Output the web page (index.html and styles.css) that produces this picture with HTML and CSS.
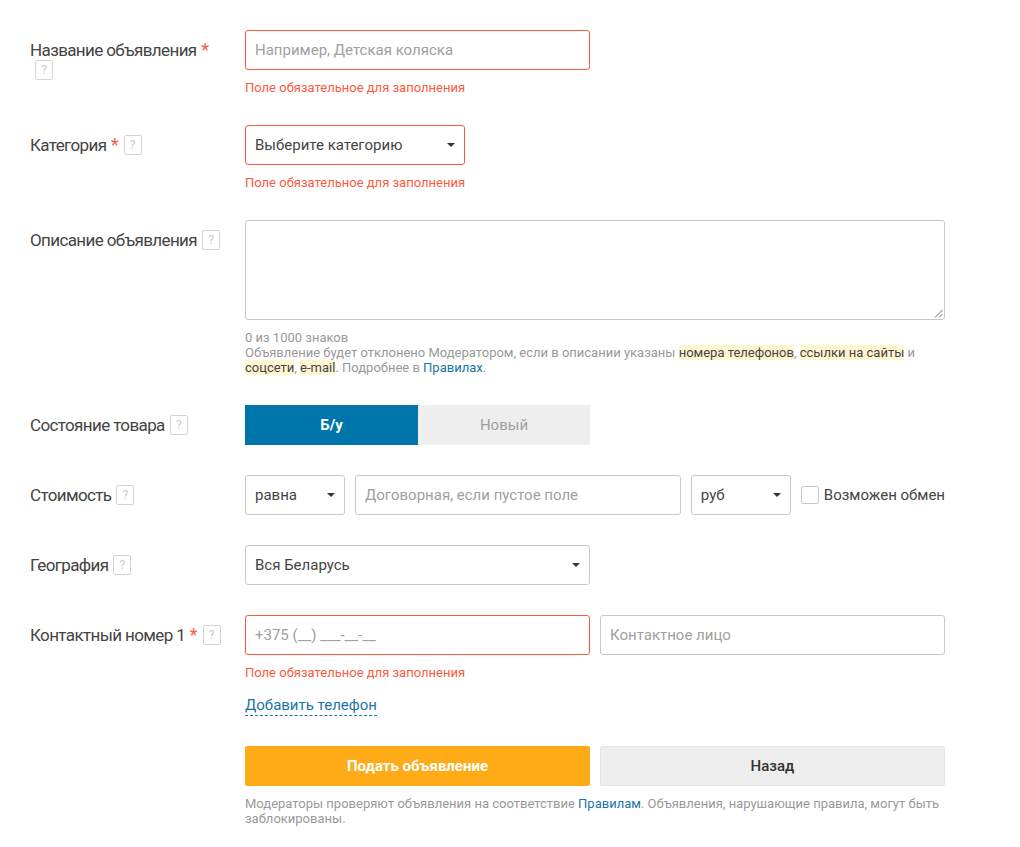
FILE: index.html
```html
<!DOCTYPE html>
<html lang="ru">
<head>
    <meta charset="UTF-8">
    <title>Подать объявление</title>
    <link rel="stylesheet" href="styles.css">
</head>
<body>
    <form class="ad-form">
        <div class="row row-name">
            <div class="label">Название объявления <span class="req">*</span><span class="help">?</span></div>
            <div class="field">
                <div class="control w-345 invalid"><span class="placeholder">Например, Детская коляска</span></div>
                <div class="error">Поле обязательное для заполнения</div>
            </div>
        </div>

        <div class="row row-cat">
            <div class="label">Категория <span class="req">*</span><span class="help">?</span></div>
            <div class="field">
                <div class="control select w-220 invalid">Выберите категорию<span class="caret"></span></div>
                <div class="error">Поле обязательное для заполнения</div>
            </div>
        </div>

        <div class="row row-desc">
            <div class="label">Описание объявления<span class="help">?</span></div>
            <div class="field">
                <div class="textarea">
                    <svg class="grip" width="9" height="9" viewBox="0 0 9 9"><path d="M8.5 1 1 8.5M8.5 5 5 8.5" stroke="#666" fill="none"/></svg>
                </div>
                <div class="hint">
                    0 из 1000 знаков<br>
                    Объявление будет отклонено Модератором, если в описании указаны <mark>номера телефонов</mark>, <mark>ссылки на сайты</mark> и <mark>соцсети</mark>, <mark>e-mail</mark>. Подробнее в <a href="#">Правилах</a>.
                </div>
            </div>
        </div>

        <div class="row row-state">
            <div class="label">Состояние товара<span class="help">?</span></div>
            <div class="field">
                <div class="toggle">
                    <div class="toggle-on">Б/у</div>
                    <div class="toggle-off">Новый</div>
                </div>
            </div>
        </div>

        <div class="row row-price">
            <div class="label">Стоимость<span class="help">?</span></div>
            <div class="field">
                <div class="inline">
                    <div class="control select w-100">равна<span class="caret"></span></div>
                    <div class="control grow"><span class="placeholder">Договорная, если пустое поле</span></div>
                    <div class="control select w-100">руб<span class="caret"></span></div>
                    <label class="check"><span class="box"></span>Возможен обмен</label>
                </div>
            </div>
        </div>

        <div class="row row-geo">
            <div class="label">География<span class="help">?</span></div>
            <div class="field">
                <div class="control select w-345">Вся Беларусь<span class="caret"></span></div>
            </div>
        </div>

        <div class="row row-phone">
            <div class="label">Контактный номер 1 <span class="req">*</span><span class="help">?</span></div>
            <div class="field">
                <div class="inline">
                    <div class="control half invalid"><span class="placeholder">+375 (__) ___-__-__</span></div>
                    <div class="control half"><span class="placeholder">Контактное лицо</span></div>
                </div>
                <div class="error">Поле обязательное для заполнения</div>
                <a class="add-phone" href="#">Добавить телефон</a>
            </div>
        </div>

        <div class="row row-submit">
            <div class="label"></div>
            <div class="field">
                <div class="inline">
                    <div class="btn btn-submit">Подать объявление</div>
                    <div class="btn btn-back">Назад</div>
                </div>
                <div class="hint note">
                    Модераторы проверяют объявления на соответствие <a href="#">Правилам</a>. Объявления, нарушающие правила, могут быть заблокированы.
                </div>
            </div>
        </div>
    </form>
</body>
</html>
```

FILE: styles.css
```css
body {
    margin: 0;
    background: #fff;
    font-family: Roboto, "Liberation Sans", sans-serif;
    font-size: 15px;
    color: #444;
}
a {
    color: #1a75a8;
    text-decoration: none;
}
.ad-form {
    width: 915px;
    padding: 30px 0 0 30px;
}
.row {
    display: flex;
}
.label {
    width: 215px;
    flex: none;
    padding: 10px 20px 0 0;
    box-sizing: border-box;
    font-size: 17px;
    line-height: 20px;
    letter-spacing: -0.62px;
    color: #444;
}
.field {
    flex: 1;
    min-width: 0;
}
.inline {
    display: flex;
    align-items: center;
    gap: 10px;
}
.row-name { height: 95px; }
.row-cat { height: 95px; }
.row-desc { height: 185px; }
.row-state { height: 70px; }
.row-price { height: 70px; }
.row-geo { height: 70px; }
.row-phone { height: 131px; }
.req {
    margin-left: 1px;
    color: #fb5a3c;
    font-size: 18px;
    letter-spacing: 0;
}
.help {
    display: inline-block;
    width: 18px;
    height: 20px;
    margin-left: 5px;
    box-sizing: border-box;
    border: 1px solid #d4d4d4;
    border-radius: 2px;
    font-size: 12px;
    line-height: 18px;
    letter-spacing: 0;
    text-align: center;
    color: #ccc;
    vertical-align: top;
}
.control {
    position: relative;
    height: 40px;
    box-sizing: border-box;
    padding: 0 9px;
    border: 1px solid #c8c8c8;
    border-radius: 3px;
    font-size: 15px;
    line-height: 38px;
    color: #444;
    white-space: nowrap;
}
.control.invalid {
    border-color: #fb5a3c;
}
.placeholder {
    color: #a0a0a0;
}
.w-345 { width: 345px; }
.w-220 { width: 220px; }
.w-100 { width: 100px; flex: none; }
.grow { flex: 1; min-width: 0; }
.half { flex: 1; }
.caret {
    position: absolute;
    right: 9px;
    top: 17px;
    border-top: 4px solid #333;
    border-left: 4px solid transparent;
    border-right: 4px solid transparent;
}
.error {
    margin-top: 10px;
    font-size: 13px;
    line-height: 16px;
    color: #fb5a3c;
}
.textarea {
    position: relative;
    height: 100px;
    box-sizing: border-box;
    border: 1px solid #c8c8c8;
    border-radius: 3px;
}
.grip {
    position: absolute;
    right: 1px;
    bottom: 1px;
}
.hint {
    margin-top: 10px;
    font-size: 13px;
    line-height: 15px;
    color: #999;
}
mark {
    background: #fff5d0;
    color: #444;
}
.toggle {
    display: flex;
    width: 345px;
    height: 40px;
    line-height: 40px;
    text-align: center;
    font-size: 15px;
}
.toggle-on {
    width: 173px;
    background: #0075ac;
    color: #fff;
    font-weight: 700;
}
.toggle-off {
    flex: 1;
    background: #eee;
    color: #a0a0a0;
}
.check {
    display: flex;
    align-items: center;
    gap: 5px;
    font-size: 15px;
    white-space: nowrap;
}
.box {
    width: 18px;
    height: 18px;
    box-sizing: border-box;
    border: 1px solid #c8c8c8;
    border-radius: 2px;
}
.add-phone {
    display: inline-block;
    margin-top: 15px;
    font-size: 15px;
    line-height: 19px;
    border-bottom: 1px dashed #1a75a8;
}
.btn {
    flex: none;
    width: 345px;
    height: 40px;
    box-sizing: border-box;
    line-height: 40px;
    border-radius: 2px;
    text-align: center;
    font-size: 15px;
}
.btn-submit {
    background: #ffab17;
    color: #fff;
    font-weight: 700;
}
.btn-back {
    background: #eee;
    line-height: 38px;
    border: 1px solid #e6e6e6;
    color: #333;
    font-weight: 500;
}
.note {
    margin-top: 10px;
}
```
